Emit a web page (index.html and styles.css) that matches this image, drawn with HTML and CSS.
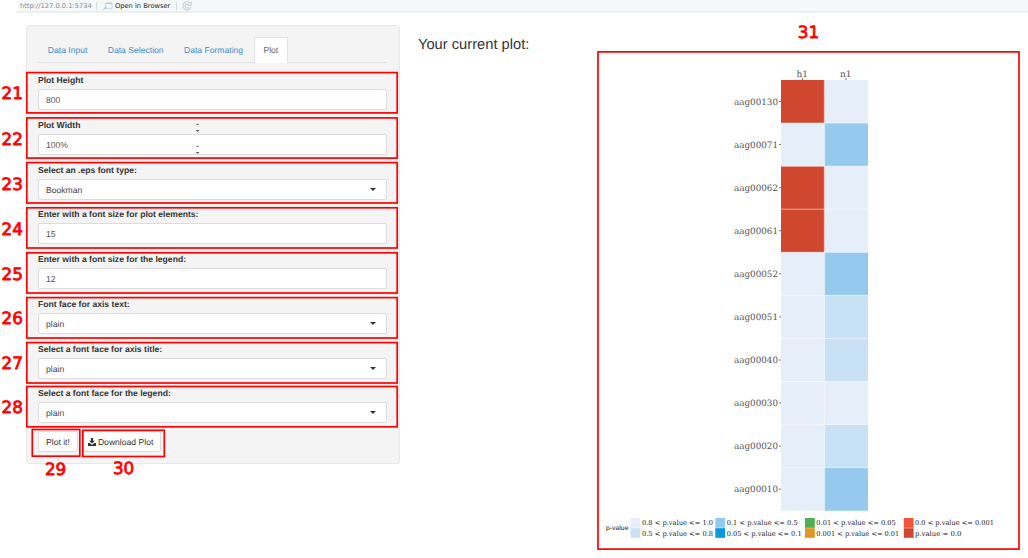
FILE: index.html
```html
<!DOCTYPE html>
<html lang="en">
<head>
<meta charset="utf-8">
<title>Plot settings</title>
<link rel="stylesheet" href="styles.css">
</head>
<body>
<header class="toolbar">
  <span class="url">http://127.0.0.1:5734</span>
  <span class="sep"></span>
  <svg class="open-icon" width="11" height="9" viewBox="0 0 11 9"><rect x="3.5" y=".8" width="6.5" height="6" rx=".8" fill="#f7fafc" stroke="#cbd7e3"/><path d="M3.500 1.500h6.500" stroke="#b4c9de" stroke-width="1.200"/><path d="M.8 8l3-2.600M2.500 5h1.800v1.800" fill="none" stroke="#aec4da" stroke-width="1"/></svg>
  <span class="open">Open in Browser</span>
  <span class="sep"></span>
  <svg class="reload-icon" width="10" height="10" viewBox="0 0 10 10"><path d="M8 1.900A4.100 4.100 0 1 0 9 6M9.200.500v3.700H5.500M6.700 3.500A2 2 0 1 0 6.800 6.300" fill="none" stroke="#c3d0e0" stroke-width="1.100"/></svg>
</header>
<main class="page">
  <form class="sidebar">
    <nav class="tabs">
      <a class="tab">Data Input</a><a class="tab">Data Selection</a><a class="tab">Data Formating</a><a class="tab active">Plot</a>
    </nav>
    <div class="fields">
      <div class="field"><label class="label">Plot Height</label><div class="control">800</div></div>
      <div class="field"><label class="label">Plot Width</label><div class="control">100%</div></div>
      <div class="field"><label class="label">Select an .eps font type:</label><div class="control select">Bookman</div></div>
      <div class="field"><label class="label">Enter with a font size for plot elements:</label><div class="control">15</div></div>
      <div class="field"><label class="label">Enter with a font size for the legend:</label><div class="control">12</div></div>
      <div class="field"><label class="label">Font face for axis text:</label><div class="control select">plain</div></div>
      <div class="field"><label class="label">Select a font face for axis title:</label><div class="control select">plain</div></div>
      <div class="field"><label class="label">Select a font face for the legend:</label><div class="control select">plain</div></div>
    </div>
    <div class="actions">
      <span class="btn">Plot it!</span>
      <span class="btn download"><svg width="8" height="8" viewBox="0 0 8 8"><path d="M2.900 0h2.200v2.700h1.900L4 5.600 1 2.700h1.900zM0 5.100h1.900L4 6.900l2.100-1.800H8V8H0z" fill="#333"/></svg>Download Plot</span>
    </div>
  </form>
  <h1 class="title">Your current plot:</h1>
  <svg class="plot" width="421" height="498" viewBox="597 52 421 498">
    <path class="l0" d="M824.500 80h43.500v43h-43.500zM781 123h43.500v43.200H781zM824.500 166.200h43.500v86.100h-43.500zM781 252.300h43.500v258.400H781zM824.500 381.500h43.500v43.100h-43.500z"/>
    <path class="l1" d="M824.500 295.400h43.500v86.100h-43.500zM824.500 424.600h43.500v43h-43.500z"/>
    <path class="l2" d="M824.500 123h43.500v43.200h-43.500zM824.500 252.300h43.500v43.100h-43.500zM824.500 467.600h43.500v43.100h-43.500z"/>
    <path class="l7" d="M781 80h43.500v43H781zM781 166.200h43.500v86.100H781z"/>
    <path class="gridlines" d="M824.300 80v430.700M781 123.100h87M781 166.200h87M781 209.200h87M781 252.300h87M781 295.400h87M781 338.400h87M781 381.500h87M781 424.500h87M781 467.600h87"/>
    <path class="ticks" d="M802.500 78v2M846 78v2M779 101.500h2M779 144.600h2M779 187.700h2M779 230.700h2M779 273.800h2M779 316.900h2M779 360h2M779 403h2M779 446.100h2M779 489.100h2"/>
    <g class="axis">
      <text x="796.500" y="76.700" textLength="11.500" lengthAdjust="spacingAndGlyphs">h1</text><text x="840" y="76.700" textLength="11.500" lengthAdjust="spacingAndGlyphs">n1</text>
      <text x="734" y="104.500" textLength="44" lengthAdjust="spacingAndGlyphs">aag00130</text>
      <text x="734" y="147.500" textLength="44" lengthAdjust="spacingAndGlyphs">aag00071</text>
      <text x="734" y="190.600" textLength="44" lengthAdjust="spacingAndGlyphs">aag00062</text>
      <text x="734" y="233.700" textLength="44" lengthAdjust="spacingAndGlyphs">aag00061</text>
      <text x="734" y="276.700" textLength="44" lengthAdjust="spacingAndGlyphs">aag00052</text>
      <text x="734" y="319.800" textLength="44" lengthAdjust="spacingAndGlyphs">aag00051</text>
      <text x="734" y="362.800" textLength="44" lengthAdjust="spacingAndGlyphs">aag00040</text>
      <text x="734" y="405.900" textLength="44" lengthAdjust="spacingAndGlyphs">aag00030</text>
      <text x="734" y="448.900" textLength="44" lengthAdjust="spacingAndGlyphs">aag00020</text>
      <text x="734" y="492" textLength="44" lengthAdjust="spacingAndGlyphs">aag00010</text>
    </g>
    <text class="legend-title" x="606" y="530" textLength="22.500" lengthAdjust="spacingAndGlyphs">p-value</text>
    <g>
      <rect class="l0" x="630.500" y="518" width="9.800" height="9.800"/><rect class="l1" x="630.500" y="528.200" width="9.800" height="9.600"/>
      <rect class="l2" x="715.300" y="518" width="9.800" height="9.800"/><rect class="l3" x="715.300" y="528.200" width="9.800" height="9.600"/>
      <rect class="l4" x="805" y="518" width="9.800" height="9.800"/><rect class="l5" x="805" y="528.200" width="9.800" height="9.600"/>
      <rect class="l6" x="903.800" y="518" width="9.800" height="9.800"/><rect class="l7" x="903.800" y="528.200" width="9.800" height="9.600"/>
    </g>
    <g class="legend">
      <text x="642" y="525" textLength="71" lengthAdjust="spacingAndGlyphs">0.8 &lt; p.value &lt;= 1.0</text><text x="642" y="536" textLength="71" lengthAdjust="spacingAndGlyphs">0.5 &lt; p.value &lt;= 0.8</text>
      <text x="726.700" y="525" textLength="71" lengthAdjust="spacingAndGlyphs">0.1 &lt; p.value &lt;= 0.5</text><text x="726.700" y="536" textLength="75" lengthAdjust="spacingAndGlyphs">0.05 &lt; p.value &lt;= 0.1</text>
      <text x="816.300" y="525" textLength="79.500" lengthAdjust="spacingAndGlyphs">0.01 &lt; p.value &lt;= 0.05</text><text x="816.300" y="536" textLength="83" lengthAdjust="spacingAndGlyphs">0.001 &lt; p.value &lt;= 0.01</text>
      <text x="915" y="525" textLength="79" lengthAdjust="spacingAndGlyphs">0.0 &lt; p.value &lt;= 0.001</text><text x="915" y="536" textLength="46.500" lengthAdjust="spacingAndGlyphs">p.value = 0.0</text>
    </g>
  </svg>
</main>
<svg class="callouts" width="1028" height="558" viewBox="0 0 1028 558">
  <g class="boxes">
    <rect x="26.800" y="72.600" width="370.400" height="40.300"/><rect x="26.800" y="117.900" width="370.400" height="40.200"/>
    <rect x="26.800" y="162.600" width="370.400" height="40.400"/><rect x="26.800" y="207.800" width="370.400" height="40.200"/>
    <rect x="26.800" y="252.800" width="370.400" height="40.200"/><rect x="26.800" y="297.600" width="370.400" height="40.400"/>
    <rect x="26.800" y="342.600" width="370.400" height="40.400"/><rect x="26.800" y="386.500" width="370.400" height="40.300"/>
    <rect x="32.300" y="429.500" width="47.500" height="26.700"/><rect x="82.800" y="430.300" width="81.500" height="26.200"/>
    <rect x="598" y="51.900" width="421" height="497.200"/>
  </g>
  <g class="numbers">
    <text x="1.600" y="98.900">21</text><text x="1.600" y="144.600">22</text>
    <text x="1.600" y="189.700">23</text><text x="1.600" y="234.500">24</text>
    <text x="1.600" y="279.500">25</text><text x="1.600" y="324.400">26</text>
    <text x="1.600" y="369.200">27</text><text x="1.600" y="413.400">28</text>
    <text x="44.900" y="475">29</text><text x="112.900" y="473.600">30</text>
    <text x="797.800" y="38.400">31</text>
  </g>
  <path class="spinners" d="M196 125l1.500-1.500 1.500 1.500zM195.700 130h3.800l-1.900 2zM196 147l1.500-1.500 1.500 1.500zM195.700 152h3.800l-1.900 2z"/>
</svg>
</body>
</html>
```
FILE: styles.css
```css
* { box-sizing: border-box; }
body { margin: 0; width: 1028px; height: 558px; overflow: hidden; position: relative; background: #fff; color: #333; font: 8.600px/12px "Liberation Sans", Arial, sans-serif; text-rendering: geometricPrecision; }
.toolbar { margin-left: 17px; height: 13px; padding: 1px 3px 0; display: flex; align-items: center; background: #f4f8f9; border-bottom: 2px solid #eaf0f0; font: 6.700px/10px "DejaVu Sans", sans-serif; color: #888; }
.url { width: 72px; white-space: nowrap; }
.sep { width: 1px; height: 8px; margin: 0 5px 0 4px; background: #d5dcdf; }
.open-icon { margin-right: 2px; }
.open { width: 57px; color: #222; white-space: nowrap; }
.page { display: grid; grid-template-columns: 374px 161px 421px; column-gap: 18px; padding: 12px 0 0 26px; }
.sidebar { height: 439px; padding: 11px 12px 0 11px; background: #f4f4f4; border: 1px solid #e8e8e8; border-radius: 3px; }
.tabs { display: flex; height: 26px; border-bottom: 1px solid #e2e2e2; }
.tab { padding: 7px 8.800px 0; height: 26px; margin-right: .7px; color: #428bca; border: 1px solid transparent; border-bottom: 0; line-height: 11px; white-space: nowrap; }
.active { color: #666; background: #fff; border-color: #e2e2e2; border-radius: 2px 2px 0 0; }
.fields { padding-top: 11px; }
.field { height: 44.750px; }
.label { display: block; height: 15px; font-weight: bold; line-height: 13px; }
.control { height: 21px; padding: 0 7px; background: #fff; border: 1px solid #dcdcdc; border-radius: 2px; line-height: 20px; color: #555; }
.select { display: flex; justify-content: space-between; color: #444; }
.select::after { content: ""; align-self: center; margin-right: 3.500px; border: 3px solid transparent; border-top-color: #333; border-bottom: 0; }
.actions { display: flex; gap: 5px; margin-top: -1px; }
.btn { height: 21px; padding: 0 7px; background: #fff; border: 1px solid #ddd; border-radius: 2px; line-height: 20px; white-space: nowrap; }
.download { display: flex; align-items: center; gap: 2px; padding: 0 7px 0 4px; }
.title { margin: 10px 0 0; font: 14.700px/20px "Liberation Sans", Arial, sans-serif; white-space: nowrap; }
.plot { display: block; margin-top: 27px; }
.l0 { fill: #e6eefa; }
.l1 { fill: #c9e1f5; }
.l2 { fill: #95caee; }
.l3 { fill: #0799dc; }
.l4 { fill: #4cb050; }
.l5 { fill: #e29625; }
.l6 { fill: #f4543c; }
.l7 { fill: #cf472f; }
.gridlines { stroke: #fff; stroke-opacity: .55; stroke-width: 1; }
.ticks { stroke: #555; stroke-width: .8; }
.axis { font: 8.800px "DejaVu Serif", serif; fill: #555; }
.legend { font: 6.900px "DejaVu Serif", serif; fill: #222; }
.legend-title { font: 6.600px "Liberation Sans", sans-serif; fill: #222; }
.callouts { position: absolute; left: 0; top: 0; pointer-events: none; }
.boxes { fill: none; stroke: #f00; stroke-width: 1.700px; }
.numbers { font: 16.800px "DejaVu Sans", sans-serif; fill: #f00; stroke: #f00; stroke-width: .8px; }
.spinners { fill: #666; }
```
